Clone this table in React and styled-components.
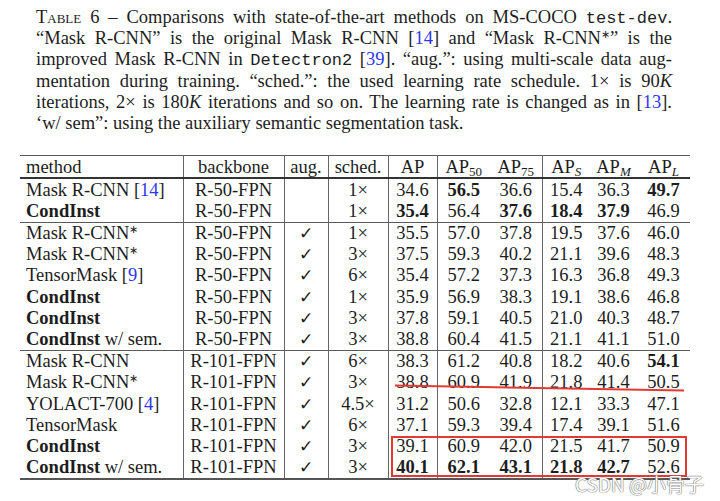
import React from 'react';
import styled, { createGlobalStyle } from 'styled-components';

const GlobalStyle = createGlobalStyle`
  html, body {
    margin: 0;
    padding: 0;
    background: #fff;
  }
  body {
    font-family: "Liberation Serif", "Times New Roman", serif;
    color: #1d1d1d;
  }
`;

const groups = [
  [
    { name: 'Mask R-CNN', cite: '14', bb: 'R-50-FPN', aug: false, sched: '1×', v: ['34.6', '56.5', '36.6', '15.4', '36.3', '49.7'], bold: [1, 5] },
    { name: 'CondInst', strong: true, bb: 'R-50-FPN', aug: false, sched: '1×', v: ['35.4', '56.4', '37.6', '18.4', '37.9', '46.9'], bold: [0, 2, 3, 4] },
  ],
  [
    { name: 'Mask R-CNN', star: true, bb: 'R-50-FPN', aug: true, sched: '1×', v: ['35.5', '57.0', '37.8', '19.5', '37.6', '46.0'] },
    { name: 'Mask R-CNN', star: true, bb: 'R-50-FPN', aug: true, sched: '3×', v: ['37.5', '59.3', '40.2', '21.1', '39.6', '48.3'] },
    { name: 'TensorMask', cite: '9', bb: 'R-50-FPN', aug: true, sched: '6×', v: ['35.4', '57.2', '37.3', '16.3', '36.8', '49.3'] },
    { name: 'CondInst', strong: true, bb: 'R-50-FPN', aug: true, sched: '1×', v: ['35.9', '56.9', '38.3', '19.1', '38.6', '46.8'] },
    { name: 'CondInst', strong: true, bb: 'R-50-FPN', aug: true, sched: '3×', v: ['37.8', '59.1', '40.5', '21.0', '40.3', '48.7'] },
    { name: 'CondInst', strong: true, sem: true, bb: 'R-50-FPN', aug: true, sched: '3×', v: ['38.8', '60.4', '41.5', '21.1', '41.1', '51.0'] },
  ],
  [
    { name: 'Mask R-CNN', bb: 'R-101-FPN', aug: true, sched: '6×', v: ['38.3', '61.2', '40.8', '18.2', '40.6', '54.1'], bold: [5] },
    { name: 'Mask R-CNN', star: true, bb: 'R-101-FPN', aug: true, sched: '3×', v: ['38.8', '60.9', '41.9', '21.8', '41.4', '50.5'] },
    { name: 'YOLACT-700', cite: '4', bb: 'R-101-FPN', aug: true, sched: '4.5×', v: ['31.2', '50.6', '32.8', '12.1', '33.3', '47.1'] },
    { name: 'TensorMask', bb: 'R-101-FPN', aug: true, sched: '6×', v: ['37.1', '59.3', '39.4', '17.4', '39.1', '51.6'] },
    { name: 'CondInst', strong: true, bb: 'R-101-FPN', aug: true, sched: '3×', v: ['39.1', '60.9', '42.0', '21.5', '41.7', '50.9'] },
    { name: 'CondInst', strong: true, sem: true, bb: 'R-101-FPN', aug: true, sched: '3×', v: ['40.1', '62.1', '43.1', '21.8', '42.7', '52.6'], bold: [0, 1, 2, 3, 4] },
  ],
];

// metric columns followed by a vertical rule
const numSep = [true, false, true, false, false, false];
const colWidths = [163, 101, 44, 60, 49, 53, 52, 48, 47, 53];

const App = () => {
  return (
    <Page>
      <GlobalStyle />

      {/* Caption */}
      <Caption>
        <CaptionLine>
          <SmallCaps>Table</SmallCaps> 6 – Comparisons with state-of-the-art methods on MS-COCO <Mono>test-dev</Mono>.
        </CaptionLine>
        <CaptionLine>
          “Mask R-CNN” is the original Mask R-CNN [<Cite>14</Cite>] and “Mask R-CNN<Star>∗</Star>” is the
        </CaptionLine>
        <CaptionLine>
          improved Mask R-CNN in <Mono>Detectron2</Mono> [<Cite>39</Cite>]. “aug.”: using multi-scale data aug-
        </CaptionLine>
        <CaptionLine>
          mentation during training. “sched.”: the used learning rate schedule. 1× is 90<i>K</i>
        </CaptionLine>
        <CaptionLine>
          iterations, 2× is 180<i>K</i> iterations and so on. The learning rate is changed as in [<Cite>13</Cite>].
        </CaptionLine>
        <CaptionLine $last>
          ‘w/ sem”: using the auxiliary semantic segmentation task.
        </CaptionLine>
      </Caption>

      {/* Results table */}
      <Table>
        <colgroup>
          {colWidths.map((w, i) => <col key={i} style={{ width: w }} />)}
        </colgroup>
        <thead>
          <HeadRow>
            <Cell $left $sep>method</Cell>
            <Cell $sep>backbone</Cell>
            <Cell $sep>aug.</Cell>
            <Cell $sep>sched.</Cell>
            <Cell $sep>AP</Cell>
            <Cell>AP<Sub>50</Sub></Cell>
            <Cell $sep>AP<Sub>75</Sub></Cell>
            <Cell>AP<Sub $it>S</Sub></Cell>
            <Cell>AP<Sub $it>M</Sub></Cell>
            <Cell>AP<Sub $it>L</Sub></Cell>
          </HeadRow>
        </thead>
        {groups.map((rows, gi) => (
          <Group key={gi}>
            {rows.map((r, ri) => (
              <Row key={ri}>
                <Cell $left $sep>
                  {r.strong ? <b>{r.name}</b> : r.name}
                  {r.star && <Star>∗</Star>}
                  {r.sem && ' w/ sem.'}
                  {r.cite && <> [<Cite>{r.cite}</Cite>]</>}
                </Cell>
                <Cell $sep>{r.bb}</Cell>
                <Cell $sep>{r.aug && <Check>✓</Check>}</Cell>
                <Cell $sep>{r.sched}</Cell>
                {r.v.map((val, vi) => (
                  <Cell key={vi} $sep={numSep[vi]}>
                    {r.bold && r.bold.includes(vi) ? <b>{val}</b> : val}
                  </Cell>
                ))}
              </Row>
            ))}
          </Group>
        ))}
      </Table>

      {/* Red annotations drawn over the table */}
      <Markup viewBox="0 0 720 501">
        <line x1="395" y1="385.5" x2="684" y2="390.5" stroke="#e23a33" strokeWidth="2" />
      </Markup>
      <RedBox />

      <Watermark>CSDN @小骨子</Watermark>
    </Page>
  );
};

export default App;

const Page = styled.div`
  position: relative;
  width: 720px;
  height: 501px;
  overflow: hidden;
  background: #fff;
  padding-top: 7px;
  box-sizing: border-box;
`;

const Caption = styled.div`
  width: 636px;
  margin-left: 36px;
  font-size: 18.5px;
  line-height: 21.2px;
`;

const CaptionLine = styled.div`
  height: 21.2px;
  white-space: nowrap;
  text-align: ${p => (p.$last ? 'left' : 'justify')};
  text-align-last: ${p => (p.$last ? 'left' : 'justify')};
`;

const SmallCaps = styled.span`
  font-variant: small-caps;
`;

const Mono = styled.span`
  font-family: "Liberation Mono", "DejaVu Sans Mono", monospace;
  font-size: 17px;
  line-height: 0;
`;

const Cite = styled.span`
  color: #2d36ee;
`;

const Star = styled.sup`
  font-size: 11px;
  vertical-align: 6px;
  line-height: 0;
`;

const Table = styled.table`
  margin: 21px 0 0 20px;
  width: 670px;
  border-collapse: collapse;
  table-layout: fixed;
  font-size: 18.5px;
  border-top: 1px solid #5a5a5a;
  border-bottom: 2px solid #555;
`;

const HeadRow = styled.tr`
  height: 21px;
  border-bottom: 2px solid #333;
`;

const Group = styled.tbody`
  & + & {
    border-top: 1px solid #5a5a5a;
  }
`;

const Row = styled.tr`
  height: 21.2px;
`;

const Cell = styled.td`
  padding: 0;
  padding-left: ${p => (p.$left ? '6px' : '0')};
  height: inherit;
  line-height: 18px;
  white-space: nowrap;
  text-align: ${p => (p.$left ? 'left' : 'center')};
  vertical-align: middle;
  border-right: ${p => (p.$sep ? '1px solid #666' : 'none')};
  font-weight: normal;
`;

const Sub = styled.sub`
  font-size: 13px;
  font-style: ${p => (p.$it ? 'italic' : 'normal')};
  vertical-align: -3px;
  line-height: 0;
`;

const Check = styled.span`
  font-family: "DejaVu Sans", sans-serif;
  font-size: 17px;
  line-height: 0;
`;

const Markup = styled.svg`
  position: absolute;
  left: 0;
  top: 0;
  width: 720px;
  height: 501px;
  pointer-events: none;
`;

const RedBox = styled.div`
  position: absolute;
  left: 391px;
  top: 436px;
  width: 292px;
  height: 37px;
  border: 2px solid #e23a33;
  pointer-events: none;
`;

const Watermark = styled.div`
  position: absolute;
  left: 575px;
  top: 470px;
  font-family: "Noto Sans CJK SC", "Noto Sans", sans-serif;
  font-size: 19px;
  color: #fff;
  text-shadow: 0 0 1px #777, 0 0 1px #777, 0 0 1px #777;
  white-space: nowrap;
`;
